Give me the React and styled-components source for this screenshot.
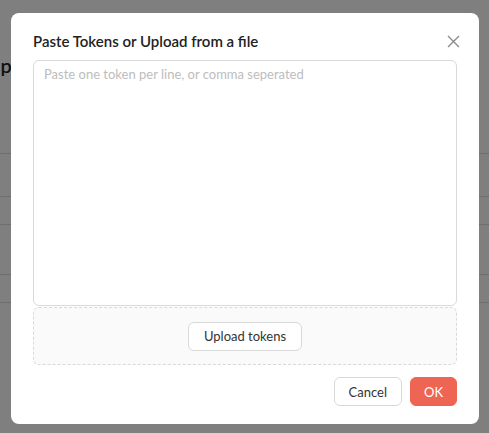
import React from 'react';
import styled, { createGlobalStyle } from 'styled-components';

const GlobalStyle = createGlobalStyle`
  html, body {
    margin: 0;
    padding: 0;
    background: #ffffff;
    font-family: "Lato", "Noto Sans", sans-serif;
  }
`;

const Page = styled.div`
  width: 489px;
  height: 433px;
  overflow: hidden;
  background: #ffffff;
`;

const PageTitle = styled.h1`
  margin: 0;
  padding: 53px 0 0 0;
  margin-left: -104px;
  font-size: 20px;
  font-weight: 600;
  color: #222;
  line-height: 24px;
`;

const Table = styled.div`
  margin-top: 76px;
`;

const TableRow = styled.div`
  height: ${p => p.h}px;
  border-bottom: 1px solid #dcdcdc;
`;

const Overlay = styled.div`
  position: fixed;
  inset: 0;
  background: rgba(0, 0, 0, 0.5);
`;

const Modal = styled.div`
  position: fixed;
  left: 11px;
  top: 13px;
  width: 468px;
  height: 411px;
  box-sizing: border-box;
  background: #ffffff;
  border-radius: 8px;
  padding: 18px 22px 18px 22px;
  display: flex;
  flex-direction: column;
`;

const Header = styled.div`
  display: flex;
  align-items: center;
  justify-content: space-between;
  height: 20px;
  margin-bottom: 9px;
`;

const Title = styled.h2`
  margin: 0;
  font-size: 15px;
  font-weight: 600;
  color: #222;
`;

const Close = styled.button`
  border: none;
  background: none;
  padding: 0;
  margin-right: -4px;
  width: 16px;
  height: 16px;
  display: flex;
  align-items: center;
  justify-content: center;
  cursor: pointer;
`;

const TextArea = styled.textarea`
  flex: 1;
  resize: none;
  box-sizing: border-box;
  border: 1px solid #d9d9d9;
  border-radius: 6px;
  padding: 5px 10px;
  font-family: "Lato", "Noto Sans", sans-serif;
  font-size: 13px;
  color: #333;
  outline: none;
  &::placeholder {
    color: #bdbdbd;
  }
`;

const Dropzone = styled.div`
  height: 58px;
  box-sizing: border-box;
  border: 1px dashed #d9d9d9;
  border-radius: 6px;
  background: #fafafa;
  display: flex;
  align-items: center;
  justify-content: center;
  margin-top: 1px;
`;

const Button = styled.button`
  height: 29px;
  box-sizing: border-box;
  border-radius: 6px;
  border: 1px solid ${p => (p.primary ? '#ef6553' : '#d9d9d9')};
  background: ${p => (p.primary ? '#ef6553' : '#ffffff')};
  color: ${p => (p.primary ? '#ffffff' : '#333333')};
  font-family: "Lato", "Noto Sans", sans-serif;
  font-size: 13px;
  padding: 0 ${p => p.px || 14}px;
  cursor: pointer;
`;

const Footer = styled.div`
  display: flex;
  justify-content: flex-end;
  gap: 8px;
  margin-top: 12px;
`;

export default function App() {
  return (
    <>
      <GlobalStyle />
      <Page>
        <PageTitle>Import Setup</PageTitle>
        <Table>
          <TableRow h={0} />
          <TableRow h={42} />
          <TableRow h={27} />
          <TableRow h={49} />
          <TableRow h={27} />
        </Table>
      </Page>
      <Overlay />
      <Modal>
        <Header>
          <Title>Paste Tokens or Upload from a file</Title>
          <Close aria-label="Close">
            <svg width="13" height="13" viewBox="0 0 13 13">
              <path d="M1 1L12 12M12 1L1 12" stroke="#8c8c8c" strokeWidth="1.4" />
            </svg>
          </Close>
        </Header>
        <TextArea placeholder="Paste one token per line, or comma seperated" />
        <Dropzone>
          <Button px={15}>Upload tokens</Button>
        </Dropzone>
        <Footer>
          <Button px={14}>Cancel</Button>
          <Button primary px={13}>OK</Button>
        </Footer>
      </Modal>
    </>
  );
}
